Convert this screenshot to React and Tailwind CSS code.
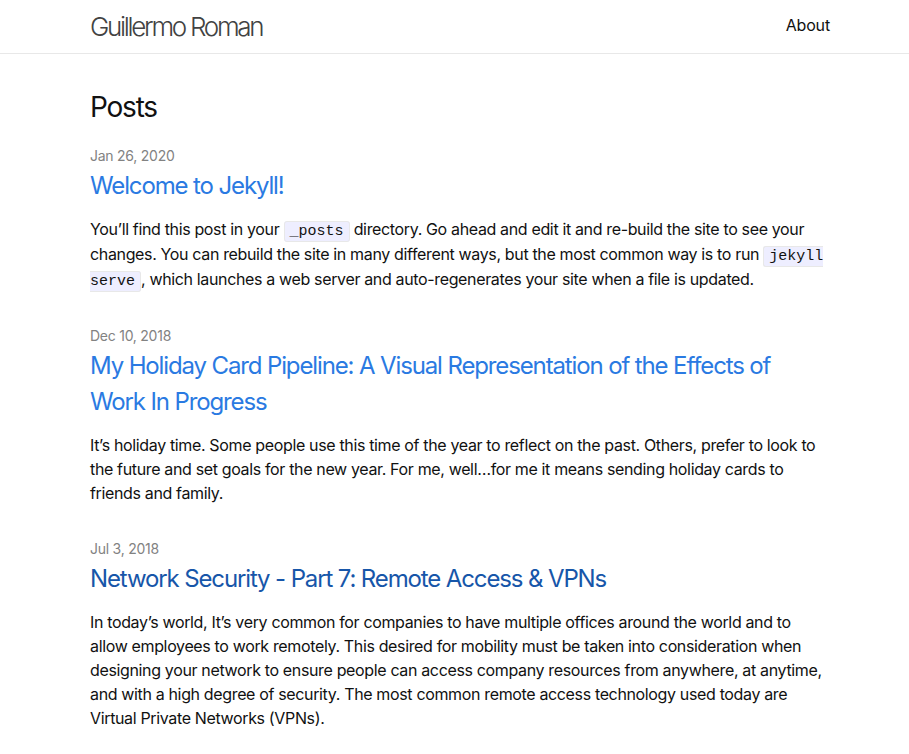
export default function App() {
  const code = "font-['Liberation_Mono',monospace] text-[15px] leading-none tracking-normal bg-[#eef] border border-[#e8e8e8] rounded-[3px] px-[5px] py-px";
  const title = "text-[24px] leading-[36px] mb-[13px] mt-[2px] tracking-[-0.047em]";
  const date = "text-[14px] text-[#828282] leading-[21px] tracking-[-0.018em]";
  return (
    <div className="min-h-screen bg-white text-[#111] font-['Inter',sans-serif] text-[16px] leading-[1.5]">
      <header className="border-b border-[#e8e8e8]">
        <div className="w-[740px] ml-[90px] flex justify-between items-center h-[53px] pb-[1px]">
          <a className="text-[26px] font-light tracking-[-2.3px] text-[#424242]">Guillermo Roman</a>
          <a className="text-[16px] text-[#111] tracking-[-0.01em] pb-[2px]">About</a>
        </div>
      </header>
      <main className="w-[740px] ml-[90px] pt-[32px] pb-[30px]">
        <h2 className="text-[28px] leading-[42px] mb-[17px] text-[#111] tracking-[-0.043em]">Posts</h2>
        <ul>
          <li className="mb-[33px]">
            <div className={date}>Jan 26, 2020</div>
            <h3 className={title}>
              <a className="text-[#2a7ae2]">Welcome to Jekyll!</a>
            </h3>
            <p className="leading-[25px] tracking-[-0.022em]">
              You’ll find this post in your <code className={code}>_posts</code> directory. Go ahead and edit it and re-build the site to see your changes. You can rebuild the site in many different ways, but the most common way is to run <code className={code}>jekyll serve</code>, which launches a web server and auto-regenerates your site when a file is updated.
            </p>
          </li>
          <li className="mb-[33px]">
            <div className={date}>Dec 10, 2018</div>
            <h3 className={title}>
              <a className="text-[#2a7ae2]">My Holiday Card Pipeline: A Visual Representation of the Effects of Work In Progress</a>
            </h3>
            <p className="leading-[24px] tracking-[-0.022em]">
              It’s holiday time. Some people use this time of the year to reflect on the past. Others, prefer to look to the future and set goals for the new year. For me, well…for me it means sending holiday cards to friends and family.
            </p>
          </li>
          <li className="mb-[30px]">
            <div className={date}>Jul 3, 2018</div>
            <h3 className={title}>
              <a className="text-[#1756a9]">Network Security - Part 7: Remote Access &amp; VPNs</a>
            </h3>
            <p className="leading-[24px] tracking-[-0.022em]">
              In today’s world, It’s very common for companies to have multiple offices around the world and to allow employees to work remotely. This desired for mobility must be taken into consideration when designing your network to ensure people can access company resources from anywhere, at anytime, and with a high degree of security. The most common remote access technology used today are Virtual Private Networks (VPNs).
            </p>
          </li>
        </ul>
      </main>
    </div>
  );
}
